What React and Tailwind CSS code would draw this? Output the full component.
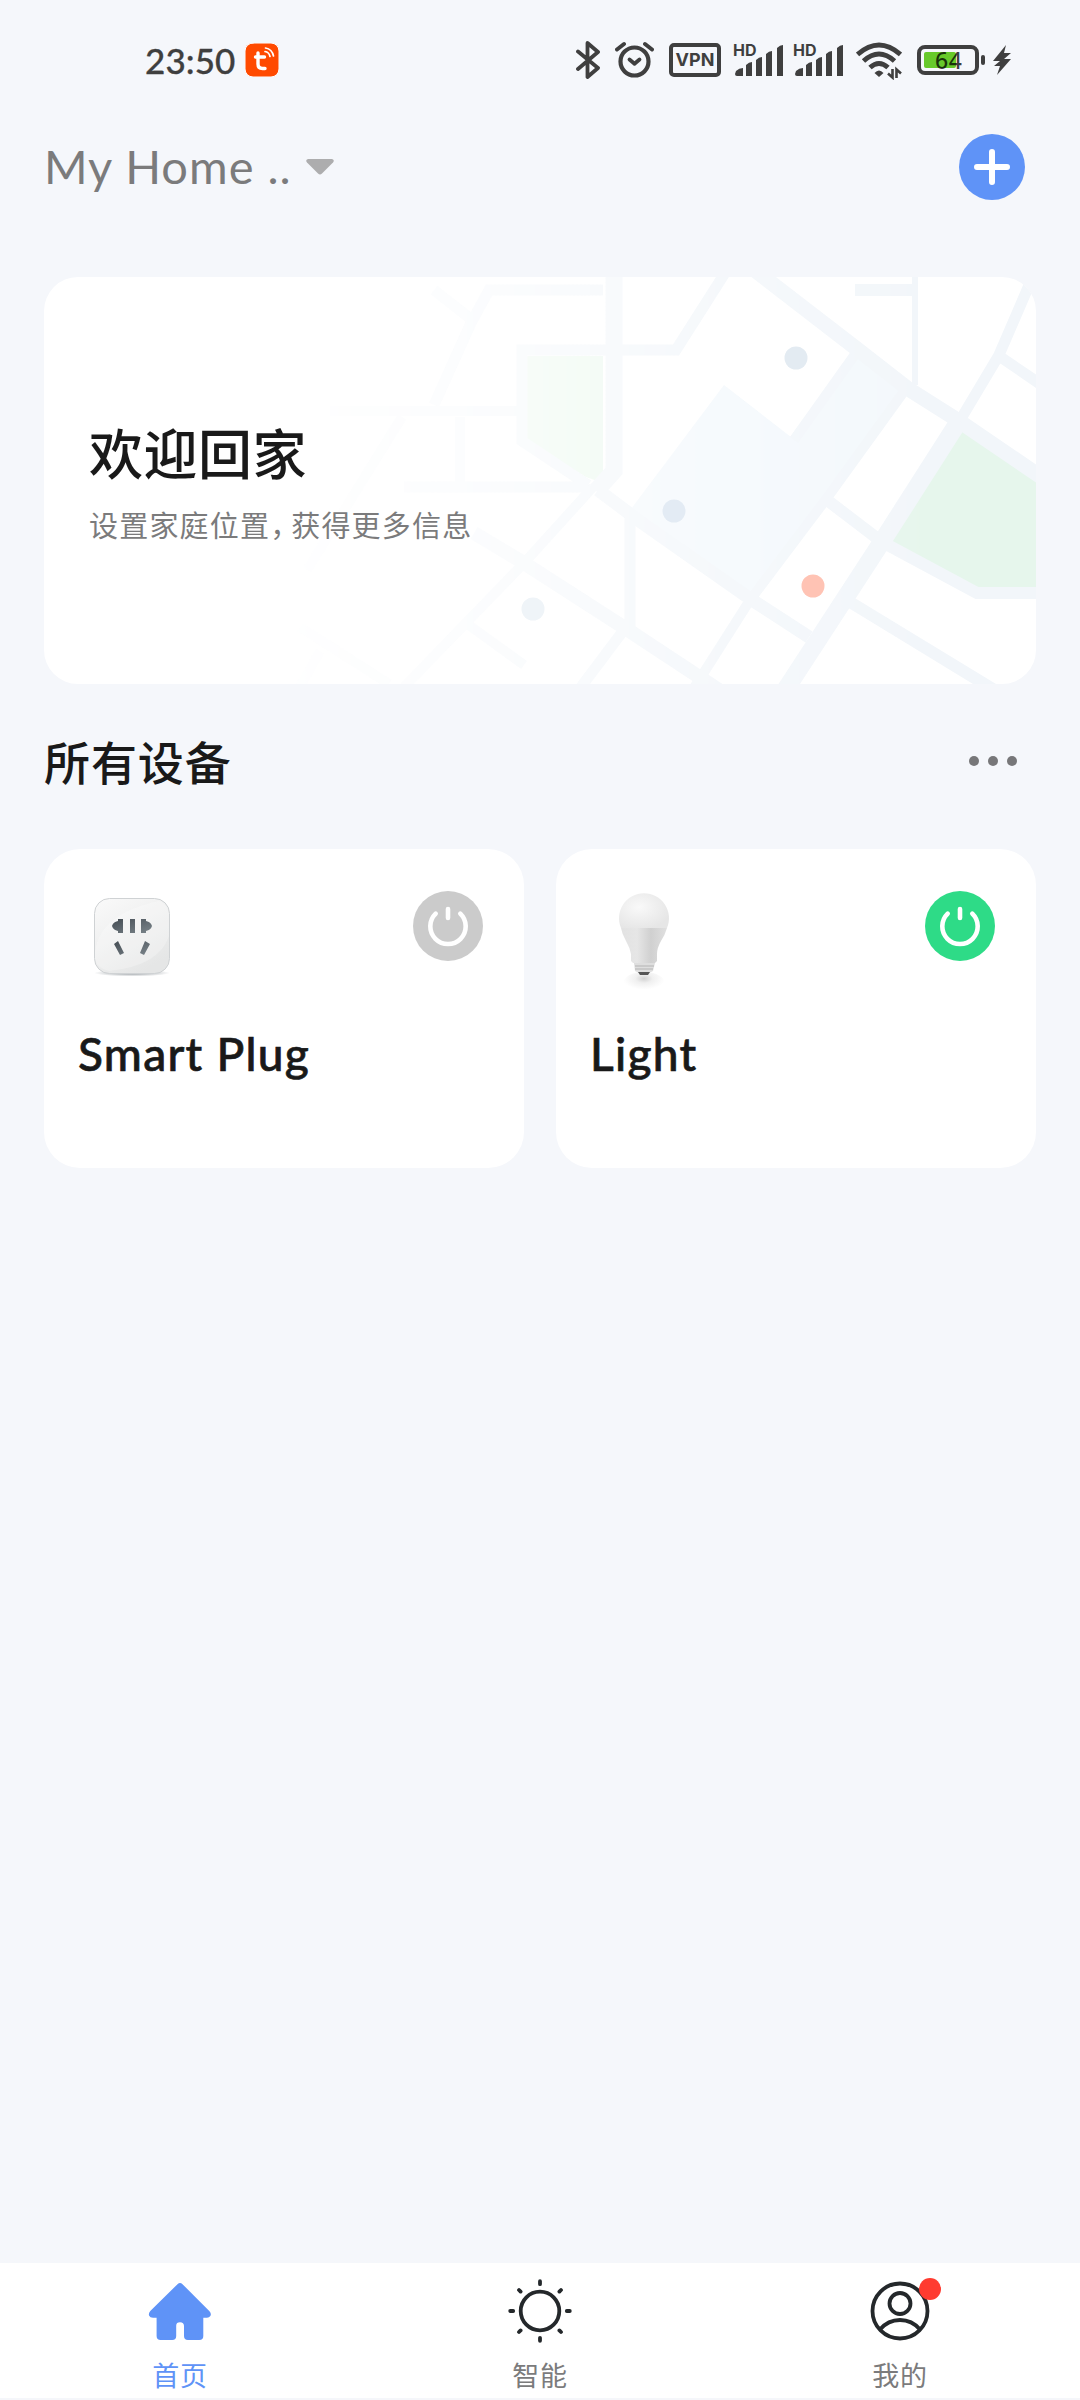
import React, { useState } from "react";

const StatusBar = () => (
  <div className="flex items-center h-[120px] pl-[145px] text-[#3f3f3f]">
    <span className="w-[100px] text-[35px] leading-[40px] font-['Lato',sans-serif] font-medium tracking-[0.1px] whitespace-nowrap [-webkit-text-stroke:0.3px_#3f3f3f]">
      23:50
    </span>
    <svg width="34" height="34" viewBox="0 0 34 34" fill="none" stroke="#fff" strokeLinecap="round">
      <rect width="34" height="34" rx="8" fill="#ff4a00" />
      <path d="M13 10v11q0 4.500 4.500 4.500h2.500M10.500 14h9" strokeWidth="3.400" />
      <path d="M20 8.500q4 .5 5 5" strokeWidth="1.700" />
      <path d="M20.500 5q6.500 1 8 8" strokeWidth="1.700" />
    </svg>

    {/* Bluetooth */}
    <svg className="ml-[297px]" width="24" height="40" viewBox="0 0 24 40" fill="none" stroke="#3f3f3f" strokeWidth="3.800" strokeLinejoin="round" strokeLinecap="round">
      <path d="M2 11.500 22 28 11.500 37V3L22 12 2 29" />
    </svg>

    {/* Alarm */}
    <svg className="ml-[15px]" width="39" height="40" viewBox="0 0 39 40" fill="none" stroke="#3f3f3f" strokeLinecap="round" strokeLinejoin="round">
      <circle cx="19.500" cy="21.500" r="14" strokeWidth="4.200" />
      <path d="m14.500 19.500 5 4.200 5-4.200" strokeWidth="3.800" />
      <path d="M2 9.500 9 4M37 9.500 30 4" strokeWidth="4" />
    </svg>

    <div className="ml-[15px] flex h-[34px] w-[52px] items-center justify-center rounded-[5px] border-[4px] border-[#3f3f3f] text-[18px] leading-none font-bold font-['Inter',sans-serif]">
      VPN
    </div>

    <Signal className="ml-[11px]" />
    <Signal className="ml-[8px]" />

    {/* Wifi */}
    <svg className="ml-[12px]" width="46" height="40" viewBox="0 0 46 40" fill="none" stroke="#3f3f3f">
      <path d="M1.500 14.500Q23-4.500 44.500 14.500" strokeWidth="5" />
      <path d="M7.500 21Q23 7 38.500 21" strokeWidth="5" />
      <path d="M14 27.500Q23 19.500 32 27.500" strokeWidth="5" />
      <path d="M18.500 33q4.500-5 9 0l-4.500 4z" fill="#3f3f3f" stroke="none" />
      <path d="M36.500 29v8.500l-4.500-4M40.500 38v-8.500l4.500 4" strokeWidth="2.600" />
    </svg>

    {/* Battery and charging bolt */}
    <div className="relative ml-[15px] h-[40px] w-[95px]">
      <svg width="95" height="40" viewBox="0 0 95 40">
        <rect x="2" y="7" width="58" height="26" rx="6" fill="none" stroke="#3f3f3f" strokeWidth="4" />
        <rect x="7" y="12" width="32" height="16" rx="2" fill="#67c92b" />
        <rect x="64" y="15" width="4" height="10" rx="2" fill="#3f3f3f" />
        <path d="M89 5 76 21h7l-6 5h6l-3 9 14-16h-7l7-6h-7z" fill="#3f3f3f" />
      </svg>
      <span className="absolute left-[18px] top-[8px] text-[23px] leading-[24px] font-medium tracking-[0.5px] font-['Noto_Sans',sans-serif] text-black/75">
        64
      </span>
    </div>
  </div>
);

const Signal = ({ className }) => (
  <div className={`relative h-[40px] w-[52px] ${className}`}>
    <svg width="52" height="40" viewBox="0 0 52 40" fill="#3f3f3f">
      <path d="M4 31q3-3 7-3v8H5q-2 0-2-2zM14 25q3-3 6-3v14h-6zM24 20q3-3 6-3v19h-6zM34 14q3-3 6-3v25h-6zM45 8q3-3 6-3v31h-6z" />
    </svg>
    <span className="absolute left-[1px] top-[2px] text-[16px] leading-[16px] font-bold font-['Inter',sans-serif]">
      HD
    </span>
  </div>
);

const CityMap = () => (
  <svg className="absolute inset-0" width="992" height="407" viewBox="0 0 992 407" fill="none">
    <defs>
      <linearGradient id="fade" x1="0" y1="0" x2="992" y2="0" gradientUnits="userSpaceOnUse">
        <stop offset="0.22" stopColor="#fff" stopOpacity="0" />
        <stop offset="0.45" stopColor="#fff" stopOpacity="0.3" />
        <stop offset="0.65" stopColor="#fff" stopOpacity="0.7" />
        <stop offset="0.9" stopColor="#fff" />
      </linearGradient>
      <mask id="mapMask">
        <rect width="992" height="407" fill="url(#fade)" />
      </mask>
    </defs>
    <g mask="url(#mapMask)">
      {/* Blocks */}
      <path d="M680 108 747 160 815 78 864 113 713 322 587 232z" fill="#f3f8fc" />
      <path d="M483 79h76v127l-17-6-59-35z" fill="#eaf8ed" />
      <path d="M918 150 997 203V312H930L842 262z" fill="#e6f6ec" />

      {/* Streets */}
      <g stroke="#f2f6fa">
        <path d="M286 134H477M416 140v70M358 140 263 293M256 350l89 57M276 374l-20 36" strokeWidth="10" />
        <path d="M360 210H544" strokeWidth="11" />
        <path d="M559 13H445L427 46 390 128M390 13l42 33" strokeWidth="11" />
        <path d="M681-4 632 73H478v91l66 44" strokeWidth="11" />
        <path d="M570 0v194l-18 20" strokeWidth="17" />
        <path d="M549 210 480 286 422 346 360 410M422 346l58 42" strokeWidth="10" />
        <path d="M430 256 480 286 584 353 678 415" strokeWidth="14" />
        <path d="M582 350 537 410M586 236V350" strokeWidth="11" />
        <path d="M554 213 594 243 708 323 765 360" strokeWidth="13" />
        <path d="M861 113 780 225 706 323 650 411M812 76 750 163" strokeWidth="10" />
        <path d="M811 13h57" strokeWidth="12" />
        <path d="M871 0v108" strokeWidth="6" />
        <path d="M708-9 813 72 863 111 915 144 1000 202" strokeWidth="15" />
        <path d="M986 6 955 78 918 140M955 79l44 30" strokeWidth="11" />
        <path d="M783 223 838 265 933 316H997" strokeWidth="12" />
        <path d="M806 325 952 414" strokeWidth="12" />
        <path d="M915 144 839 263 742 412" strokeWidth="18" />
      </g>
    </g>

    {/* Pins */}
    <circle cx="752" cy="81" r="11.500" fill="#e3ebf2" />
    <circle cx="630" cy="234" r="11.500" fill="#e3ebf4" />
    <circle cx="489" cy="332" r="11.500" fill="#eff4f8" />
    <circle cx="769" cy="309" r="11.500" fill="#ffc3b4" />
  </svg>
);

const PlugImage = () => (
  <svg width="100" height="100" viewBox="1 0 100 100">
    <defs>
      <linearGradient id="plugBody" x1="0" y1="0" x2="0.6" y2="1">
        <stop offset="0" stopColor="#fafafa" />
        <stop offset="1" stopColor="#e5e6e6" />
      </linearGradient>
      <linearGradient id="plugHole" x1="0" y1="0" x2="1" y2="1">
        <stop offset="0" stopColor="#454d54" />
        <stop offset="1" stopColor="#7b858b" />
      </linearGradient>
      <radialGradient id="plugShadow">
        <stop offset="0" stopColor="#8d9499" />
        <stop offset="1" stopColor="#8d9499" stopOpacity="0" />
      </radialGradient>
    </defs>
    <ellipse cx="55" cy="86" rx="38" ry="3.500" fill="url(#plugShadow)" />
    <rect x="17.500" y="11.500" width="75" height="75" rx="15" fill="url(#plugBody)" stroke="#cfd2d4" />
    <path d="M18 64Q24 26 82 14q9 3 10 14v21Q82 79 32 84 18 80 18 70z" fill="#fff" opacity=".25" />
    <g fill="url(#plugHole)">
      <path d="M46 32v14h-5v-2q-5-1-6-5 1-4 6-5v-2zM53 32h5v14h-5zM64 32h5v2q5 1 6 5-1 4-6 5v2h-5z" />
      <path d="m37 57 4-3 6 12-4 2zM68 54l5 3-6 11-4-2z" />
    </g>
  </svg>
);

const BulbImage = () => (
  <svg width="100" height="106" viewBox="2 0 100 106">
    <defs>
      <radialGradient id="bulbGlass" cx="0.4" cy="0.4" r="0.65">
        <stop offset="0" stopColor="#f9f9f9" />
        <stop offset="1" stopColor="#e6e6e6" />
      </radialGradient>
      <linearGradient id="bulbBody">
        <stop offset="0" stopColor="#e2e2e2" />
        <stop offset="0.35" stopColor="#e6e6e6" />
        <stop offset="0.65" stopColor="#d0d0d0" />
        <stop offset="1" stopColor="#e0e0e0" />
      </linearGradient>
      <radialGradient id="bulbShadow" cx="0.5" cy="0.3">
        <stop offset="0" stopColor="#d2d2d2" />
        <stop offset="0.4" stopColor="#f0f0f0" />
        <stop offset="1" stopColor="#fff" />
      </radialGradient>
    </defs>
    <ellipse cx="56" cy="96" rx="21" ry="11" fill="url(#bulbShadow)" />
    <path d="M33 41h46q-2 7-6 13-4 7-4 13v7l-2 2H45l-2-2v-7q-1-6-5-13-4-7-5-13z" fill="url(#bulbBody)" />
    <path d="M33 41A25 25 0 1 1 79 41z" fill="url(#bulbGlass)" />
    <path d="M46 76h21l-2 8-4 2H51l-4-2z" fill="#dedede" />
    <path d="M47 79h19M47 82h18" stroke="#aaa" strokeWidth=".8" />
    <path d="M50 85h12l-2 3h-8z" fill="#555" />
  </svg>
);

const DeviceCard = ({ name, image, on, onToggle }) => (
  <div className="h-[319px] rounded-[36px] bg-white pl-[34px]">
    <div className="flex items-start justify-between pr-[41px]">
      <div className="mt-[38px] h-[106px] w-[100px]">{image}</div>
      <button
        onClick={onToggle}
        className={`mt-[42px] flex h-[70px] w-[70px] items-center justify-center rounded-full ${
          on ? "bg-[#2edb87]" : "bg-[#cbcbcb]"
        }`}
      >
        <svg width="70" height="70" viewBox="0 0 70 70" fill="none" stroke="#fff" strokeWidth="4.600" strokeLinecap="round">
          <path d="M35 18v9M22.700 22.600a17.700 17.700 0 1 0 24.600 0" />
        </svg>
      </button>
    </div>
    <p className="mt-[31px] text-[46px] leading-[60px] font-medium tracking-[1.3px] font-['Lato',sans-serif] text-[#191919] [-webkit-text-stroke:0.7px_#191919]">
      {name}
    </p>
  </div>
);

const HomeIcon = () => (
  <svg width="64" height="64" viewBox="0 0 64 64" fill="#5f93f7">
    <path d="M29.500 5.200q2.500-2.300 5 0l27 27q2.200 2.600.8 4.800-1 1.800-3.300 1.800h-3.700V57q0 4-4 4H40q-4 0-4-4V47q0-3.800-4-3.800T28.200 47v10q0 4-4 4H12.600q-4 0-4-4V38.800H5q-3 0-4-2.300-.6-2.300 1.300-4.500z" />
  </svg>
);

const SunIcon = () => (
  <svg width="64" height="64" viewBox="0 0 64 64" fill="none" stroke="#24282b" strokeWidth="3.800" strokeLinecap="round">
    <circle cx="32" cy="32" r="19.300" />
    <path d="M32 2.200v3M32 58.800v3M2.200 32h3M58.800 32h3M11 11l1.600 1.600M51.400 51.400 53 53M11 53l1.600-1.600M51.400 12.600 53 11" />
  </svg>
);

const UserIcon = () => (
  <svg width="64" height="64" viewBox="0 0 64 64" fill="none" stroke="#24282b" strokeWidth="3.800">
    <circle cx="32" cy="32" r="27.500" />
    <circle cx="32" cy="24.500" r="10.500" />
    <path d="M12 50.500q8-9.500 20-9.500t20 9.500" />
  </svg>
);

const tabs = [
  { label: "首页", icon: <HomeIcon /> },
  { label: "智能", icon: <SunIcon /> },
  { label: "我的", icon: <UserIcon />, badge: true },
];

const App = () => {
  const [activeTab, setActiveTab] = useState(0);
  const [devices, setDevices] = useState([
    { name: "Smart Plug", image: <PlugImage />, on: false },
    { name: "Light", image: <BulbImage />, on: true },
  ]);

  const toggleDevice = (index) => {
    setDevices(devices.map((d, i) => (i === index ? { ...d, on: !d.on } : d)));
  };

  return (
    <div className="flex h-[2400px] w-[1080px] flex-col overflow-hidden bg-[#f5f7fb] font-['Noto_Sans_CJK_SC',sans-serif]">
      <StatusBar />

      {/* Header */}
      <header className="flex h-[94px] items-center pl-[44px] pr-[55px]">
        <h1 className="-mt-[2px] w-[262px] text-[47px] leading-[60px] tracking-[1px] whitespace-nowrap font-['Lato',sans-serif] text-[#7b7b7c]">
          My Home ..
        </h1>
        <svg width="28" height="18" viewBox="0 0 28 18" fill="#adadae">
          <path d="M2 1h24q3 1 1 3.500L16 15.500q-2 2-4 0L1 4.500Q-1 2 2 1z" />
        </svg>
        <button className="ml-auto flex h-[66px] w-[66px] items-center justify-center rounded-full bg-[#5f93f7]">
          <svg width="36" height="36" viewBox="0 0 36 36" stroke="#fff" strokeWidth="6" strokeLinecap="round">
            <path d="M18 3v30M3 18h30" />
          </svg>
        </button>
      </header>

      <main className="flex-1 px-[44px] pt-[63px]">
        {/* Welcome card */}
        <section className="relative h-[407px] overflow-hidden rounded-[34px] bg-white">
          <CityMap />
          <div className="relative pl-[45px] pt-[135px]">
            <h2 className="text-[54px] leading-[80px] font-medium tracking-[0.5px] text-[#191919]">欢迎回家</h2>
            <p className="mt-[10px] text-[29px] leading-[44px] tracking-[1.2px] text-[#7b7b7c]">
              设置家庭位置<span className="tracking-[-8px]">，</span>获得更多信息
            </p>
          </div>
        </section>

        <div className="flex h-[165px] items-center justify-between pr-[19px] pb-[12px]">
          <h3 className="-mt-[2px] text-[46px] leading-[60px] font-medium tracking-[0.9px] text-[#191919]">所有设备</h3>
          <div className="flex gap-[9px]">
            <span className="h-[10px] w-[10px] rounded-full bg-[#777779]" />
            <span className="h-[10px] w-[10px] rounded-full bg-[#777779]" />
            <span className="h-[10px] w-[10px] rounded-full bg-[#777779]" />
          </div>
        </div>

        {/* Devices */}
        <div className="grid grid-cols-2 gap-[32px]">
          {devices.map((device, index) => (
            <DeviceCard key={device.name} {...device} onToggle={() => toggleDevice(index)} />
          ))}
        </div>
      </main>

      {/* Bottom tabs */}
      <nav className="grid h-[137px] grid-cols-3 border-b-2 border-[#f5f6fa] bg-white">
        {tabs.map((tab, index) => (
          <button key={tab.label} onClick={() => setActiveTab(index)} className="flex flex-col items-center pt-[16px]">
            <span className="relative">
              {tab.icon}
              {tab.badge && (
                <span className="absolute -top-[1px] left-[51px] h-[22px] w-[22px] rounded-full bg-[#ff3b30]" />
              )}
            </span>
            <span
              className={`mt-[12px] text-[27px] leading-[40px] tracking-[0.8px] ${
                activeTab === index ? "text-[#5f93f7]" : "text-[#7b7b7c]"
              }`}
            >
              {tab.label}
            </span>
          </button>
        ))}
      </nav>
    </div>
  );
};

export default App;
